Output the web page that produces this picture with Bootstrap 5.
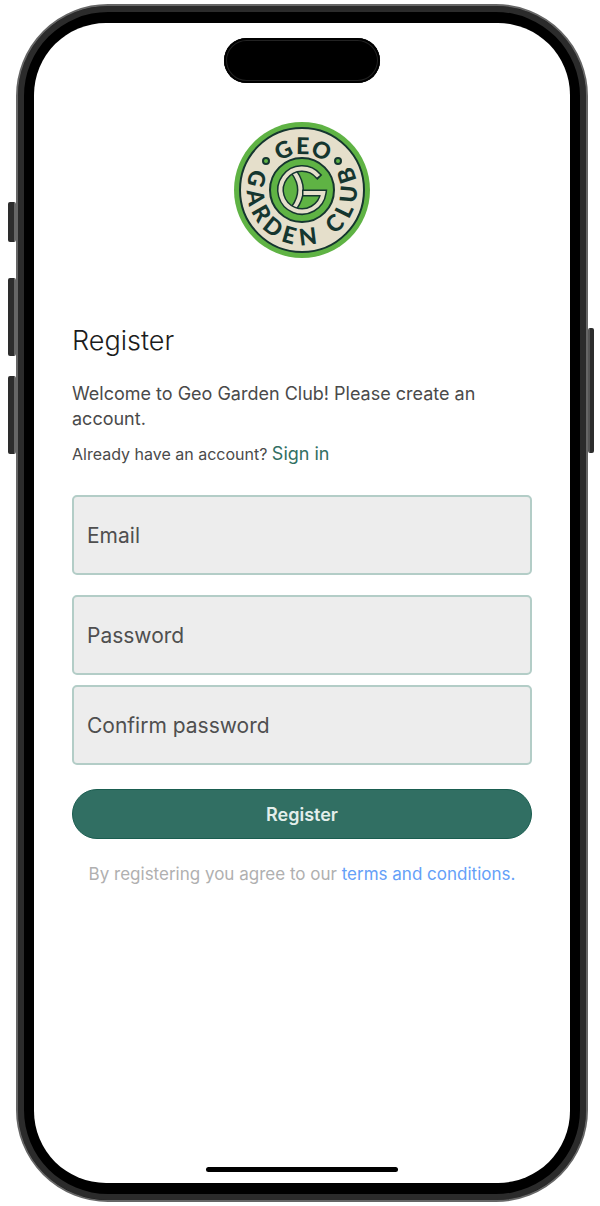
<!DOCTYPE html>
<html lang="en">
<head>
<meta charset="utf-8">
<meta name="viewport" content="width=device-width, initial-scale=1">
<title>Register – Geo Garden Club</title>
<link href="https://cdn.jsdelivr.net/npm/bootstrap@5.3.0/dist/css/bootstrap.min.css" rel="stylesheet">
<style>
  body { font-family: Inter, "Liberation Sans", sans-serif; background: #fff; color: #4a4a4a; padding: 4px 12px 4px 16px; }
  .phone { background: #000; border: 2px solid #666; border-radius: 92px; padding: 2px; box-shadow: inset 0 0 0 6px #2b2b2b; min-height: calc(100vh - 8px); }
  .screen { background: #fff; border-radius: 72px; margin: 15px 14px; padding: 15px 38px 11px; }
  .island { width: 156px; height: 45px; background: #000; box-shadow: inset 0 0 0 2px #000, inset 0 0 0 3px #222; }
  .crest { width: 136px; height: 136px; margin-top: 39px; }
  .side-key { background: #2d2d2d; border-radius: 2px; border-right: 2px solid #666; width: 8px; left: -10px; }
  .key-a { top: 196px; height: 40px; }
  .key-b { top: 272px; height: 78px; }
  .key-c { top: 370px; height: 78px; }
  .key-d { top: 322px; height: 125px; left: auto; right: -8px; width: 6px; border-right: 0; border-left: 2px solid #555; }
  .title { font-size: 27px; line-height: 36px; font-weight: 300; color: #1c1c1c; margin: 65px 0 22px; }
  .intro { font-size: 18px; line-height: 25px; margin-bottom: 10px; }
  .account { font-size: 16px; line-height: 26px; margin-bottom: 28px; }
  .account a { font-size: 18px; color: #316f63; }
  .field { height: 80px; font-size: 21px; padding: 0 13px; background: #ededed; border: 2px solid #b3cdc7; border-radius: 5px; color: #4a4a4a; }
  .field::placeholder { color: #4f4f4f; opacity: 1; }
  .field:focus { background: #ededed; border-color: #316f63; box-shadow: none; }
  .field-gap { margin-top: 20px; }
  .field-gap-sm { margin-top: 10px; }
  .submit { height: 50px; margin-top: 24px; background: #316f63; border: 1px solid #1a5d50; color: #e3eeeb; font-size: 18px; font-weight: 600; }
  .submit:hover { background: #285c52; color: #fff; }
  .terms { font-size: 17px; line-height: 26px; margin-top: 22px; color: #b0b0b0; }
  .terms a { color: #64a0f8; }
  .home-bar { width: 192px; height: 5px; background: #000; }
</style>
</head>
<body>
<div class="phone position-relative d-flex flex-column">
  <span class="side-key key-a position-absolute"></span>
  <span class="side-key key-b position-absolute"></span>
  <span class="side-key key-c position-absolute"></span>
  <span class="side-key key-d position-absolute"></span>
  <main class="screen flex-grow-1 d-flex flex-column">
    <div class="island rounded-pill mx-auto"></div>
    <svg class="crest mx-auto flex-shrink-0" viewBox="-68 -68 136 136" role="img" aria-label="Geo Garden Club">
      <circle r="68" fill="#5fb344"/>
      <circle r="62" fill="#e5dfcb" stroke="#15362f" stroke-width="2"/>
      <circle r="32" fill="#5fb344" stroke="#15362f" stroke-width="2"/>
      <g fill="#5fb344" stroke="#15362f" stroke-width="2"><circle cx="-36" cy="-29" r="3"/><circle cx="36" cy="-29" r="3"/></g>
      <g font-family="Lato, sans-serif" font-weight="900" font-size="23" fill="#15362f" text-anchor="middle">
        <text y="-36" transform="rotate(-25)">G</text>
        <text y="-36" transform="rotate(1)">E</text>
        <text y="-36" transform="rotate(26)">O</text>
        <text y="55" transform="rotate(104)">G</text>
        <text y="55" transform="rotate(81)">A</text>
        <text y="55" transform="rotate(60)">R</text>
        <text y="55" transform="rotate(38)">D</text>
        <text y="55" transform="rotate(16)">E</text>
        <text y="55" transform="rotate(-7)">N</text>
        <text y="55" transform="rotate(-44)">C</text>
        <text y="55" transform="rotate(-64)">L</text>
        <text y="55" transform="rotate(-85)">U</text>
        <text y="55" transform="rotate(-108)">B</text>
      </g>
      <g fill="none">
        <path stroke="#15362f" stroke-width="7" d="M-8-18Q5 0-8 18"/>
        <path stroke="#e5dfcb" stroke-width="4" d="M-8-18Q5 0-8 18"/>
        <path stroke="#15362f" stroke-width="7" stroke-linejoin="miter" d="M17.8-12.5L16.5-13.8A21.5 21.5 0 1 0 21.3 3H0"/>
        <path stroke="#e5dfcb" stroke-width="4" d="M16.5-13.8A21.5 21.5 0 1 0 21.3 3H1.5"/>
      </g>
    </svg>
    <h1 class="title">Register</h1>
    <p class="intro">Welcome to Geo Garden Club! Please create an account.</p>
    <p class="account">Already have an account? <a class="text-decoration-none" href="#">Sign in</a></p>
    <form class="d-flex flex-column">
      <input class="form-control field" type="email" placeholder="Email" aria-label="Email">
      <input class="form-control field field-gap" type="password" placeholder="Password" aria-label="Password">
      <input class="form-control field field-gap-sm" type="password" placeholder="Confirm password" aria-label="Confirm password">
      <button class="btn submit rounded-pill w-100" type="submit">Register</button>
    </form>
    <p class="terms text-center">By registering you agree to our <a class="text-decoration-none" href="#">terms and conditions.</a></p>
    <div class="home-bar rounded-pill mx-auto mt-auto"></div>
  </main>
</div>
<script src="https://cdn.jsdelivr.net/npm/bootstrap@5.3.0/dist/js/bootstrap.bundle.min.js"></script>
</body>
</html>
